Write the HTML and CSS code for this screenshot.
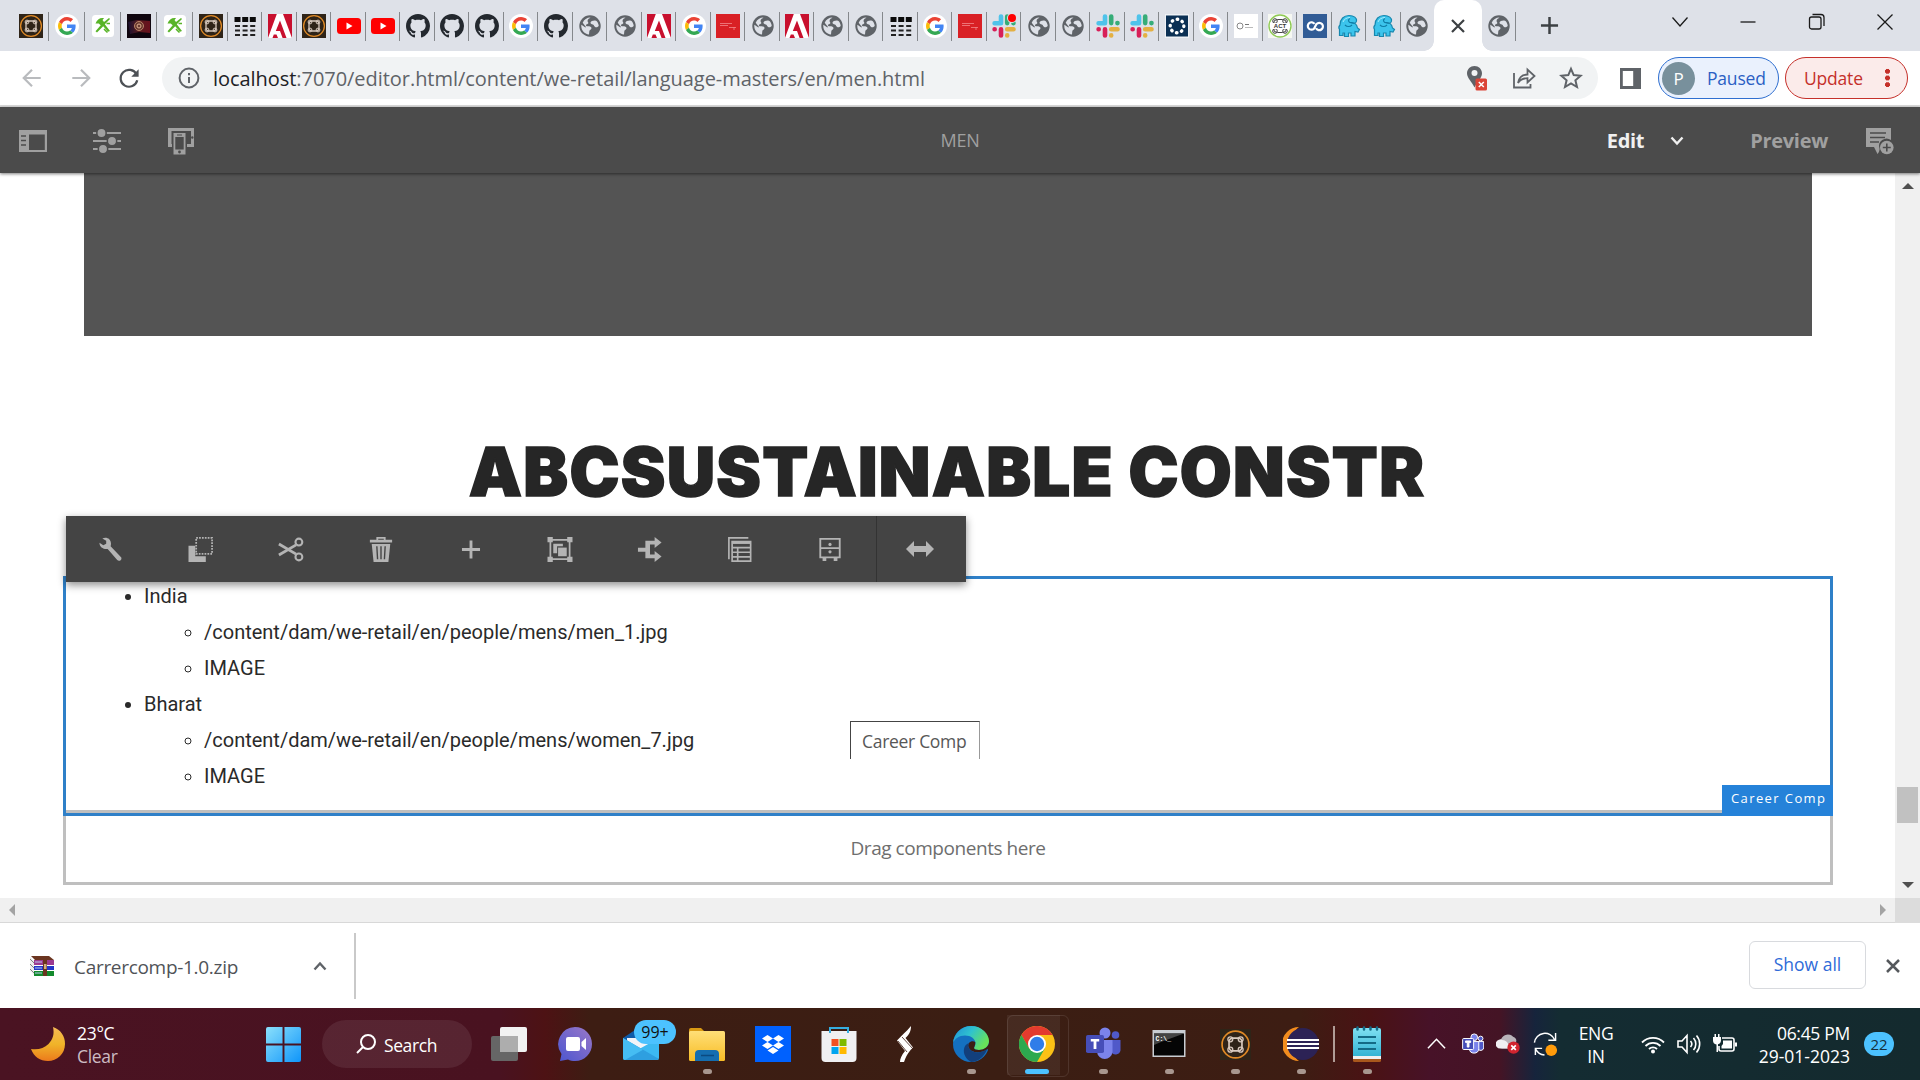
FILE: index.html
```html
<!DOCTYPE html>
<html lang="en">
<head>
  <meta charset="UTF-8" />
  <meta name="viewport" content="width=device-width, initial-scale=1.0"/>
  <title>Men</title>
  <link rel="stylesheet" href="styles.css">
</head>
<body>
  <!-- icon sprite -->
  <svg class="sprite" aria-hidden="true">
    <defs>
      <linearGradient id="gMoon" x1="0" y1="0" x2="0" y2="1"><stop offset="0" stop-color="#f5b955"/><stop offset=".5" stop-color="#f0b429"/><stop offset="1" stop-color="#ec7a1c"/></linearGradient>
      <linearGradient id="gWin" gradientUnits="userSpaceOnUse" x1="0" y1="0" x2="36" y2="36"><stop offset="0" stop-color="#8be0fb"/><stop offset="1" stop-color="#0f95fa"/></linearGradient>
      <linearGradient id="gChat" x1="1" y1="0" x2="0" y2="1"><stop offset="0" stop-color="#9a78c8"/><stop offset="1" stop-color="#4c56d0"/></linearGradient>
      <linearGradient id="gFolder" x1="0" y1="0" x2="0" y2="1"><stop offset="0" stop-color="#ffdf78"/><stop offset="1" stop-color="#f8bd26"/></linearGradient>
      <linearGradient id="gEdge" x1="0" y1="0" x2="1" y2=".5"><stop offset="0" stop-color="#1f8fd8"/><stop offset=".5" stop-color="#2fc2cf"/><stop offset="1" stop-color="#68e25a"/></linearGradient>
      <linearGradient id="gNote" x1="0" y1="0" x2="0" y2="1"><stop offset="0" stop-color="#7fe0f2"/><stop offset="1" stop-color="#35b4d4"/></linearGradient>
      <linearGradient id="gNeb" x1="0" y1="0" x2="1" y2="0"><stop offset="0" stop-color="#1a1030"/><stop offset=".5" stop-color="#5a1c20"/><stop offset="1" stop-color="#6a101c"/></linearGradient>
    </defs>
    <symbol id="aem" viewBox="0 0 24 24"><path fill="#2f2418" d="M0 0h24v24H0z"/><circle cx="12" cy="12" r="10.400" fill="none" stroke="#e08a26" stroke-width="1.300"/><rect x="7" y="7" width="10" height="10" rx="3" fill="none" stroke="#d8c9bd" stroke-width="1.300"/><g fill="none" stroke="#d8c9bd" stroke-width="1"><circle cx="8" cy="8" r="1.900"/><circle cx="16" cy="8" r="1.900"/><circle cx="8" cy="16" r="1.900"/><circle cx="16" cy="16" r="1.900"/></g></symbol>
    <symbol id="google" viewBox="0 0 24 24"><circle cx="12" cy="12" r="12" fill="#fff"/><svg x="3" y="3" width="18" height="18" viewBox="0 0 48 48"><path fill="#EA4335" d="M24 9.5c3.54 0 6.71 1.22 9.21 3.6l6.85-6.85C35.9 2.38 30.47 0 24 0 14.62 0 6.51 5.38 2.56 13.22l7.98 6.19C12.43 13.72 17.74 9.5 24 9.5z"/><path fill="#4285F4" d="M46.98 24.55c0-1.57-.15-3.09-.38-4.55H24v9.02h12.94c-.58 2.96-2.26 5.48-4.78 7.18l7.73 6c4.51-4.18 7.09-10.36 7.09-17.65z"/><path fill="#FBBC05" d="M10.53 28.59c-.48-1.45-.76-2.99-.76-4.59s.27-3.14.76-4.59l-7.98-6.19C.92 16.46 0 20.12 0 24c0 3.88.92 7.54 2.56 10.78l7.97-6.19z"/><path fill="#34A853" d="M24 48c6.48 0 11.93-2.13 15.89-5.81l-7.73-6c-2.15 1.45-4.92 2.3-8.16 2.3-6.26 0-11.57-4.22-13.47-9.91l-7.98 6.19C6.51 42.62 14.62 48 24 48z"/></svg></symbol>
    <symbol id="tool" viewBox="0 0 24 24"><rect x="1" y="1" width="22" height="22" rx="3.500" fill="#fff"/><path fill="#58b428" d="M4.500 9.500C6 5.500 9 3.500 13 4.200L11.500 6l1.500 2 5-4 1 1-5.200 5.200L19 17l-2 .8-4.800-5.600L6 18.500l-1.500-1.300 5.200-6-2-1.700z"/><path stroke="#58b428" stroke-width="1.600" d="M15.500 9.500h3.500M13 15l3.500 3.500"/></symbol>
    <symbol id="nebula" viewBox="0 0 24 24"><path fill="#10060f" d="M0 0h24v24H0z"/><path fill="url(#gNeb)" d="M1 8l9-2 13 1v12l-11-1-9 2z"/><circle cx="12" cy="12" r="4.500" fill="#6a3a30" stroke="#b98468"/><circle cx="12" cy="12" r="2" fill="none" stroke="#e0b090"/></symbol>
    <symbol id="grid" viewBox="0 0 24 24"><path fill="#0a0a0a" d="M1.500 3h6v5h-6zM9.200 3h6v5h-6zM16.800 3h6v5h-6z"/><path stroke="#222" stroke-width="2" stroke-dasharray="5 2.600" d="M2 12h21M2 16.500h21M2 21h21"/></symbol>
    <symbol id="adobe" viewBox="0 0 24 24"><path fill="#c8102e" d="M0 0h24v24H0z"/><path fill="#fff" d="M8.800 0h6.200L24 24h-5.500L12 6.500 7.800 17H12l2.600 7H10l-1.500-3.500H5.800L4.500 24H0z"/></symbol>
    <symbol id="youtube" viewBox="0 0 24 24"><rect y="4" width="24" height="16" rx="3.500" fill="#f00"/><path fill="#fff" d="M9.500 8.500 15.500 12l-6 3.500z"/></symbol>
    <symbol id="github" viewBox="0 0 16 16"><path fill="#24292f" d="M8 0C3.58 0 0 3.58 0 8c0 3.54 2.29 6.53 5.47 7.59.4.07.55-.17.55-.38 0-.19-.01-.82-.01-1.49-2.01.37-2.53-.49-2.69-.94-.09-.23-.48-.94-.82-1.13-.28-.15-.68-.52-.01-.53.63-.01 1.08.58 1.23.82.72 1.21 1.87.87 2.33.66.07-.52.28-.87.51-1.07-1.78-.2-3.64-.89-3.64-3.95 0-.87.31-1.59.82-2.15-.08-.2-.36-1.02.08-2.12 0 0 .67-.21 2.2.82.64-.18 1.32-.27 2-.27s1.36.09 2 .27c1.53-1.04 2.2-.82 2.2-.82.44 1.1.16 1.92.08 2.12.51.56.82 1.27.82 2.15 0 3.07-1.87 3.75-3.65 3.95.29.25.54.73.54 1.48 0 1.07-.01 1.93-.01 2.2 0 .21.15.46.55.38A8.01 8.01 0 0 0 16 8c0-4.42-3.58-8-8-8z"/></symbol>
    <symbol id="globe" viewBox="0 0 24 24"><circle cx="12" cy="12" r="10.700" fill="#5f6368"/><path fill="#dee1e8" d="M12.500 3.500c-1 1.200-3 1.300-3 3.500 0 1 1 1.200.8 2.200-.3 1.200-2.200.6-2.400 1.800-.1 1 .7 1.300 2 1.300 2 0 3.600.4 3.600 2 0 1.400-2 1.400-2.200 3-.1 1.300-.2 2.300-.3 3.200C6.500 20 3.300 16.500 3.300 12c0 0 0-.7.1-1.300l4 2.900c.8-.6.2-1.600-.8-2.400L4.700 8.800C6 5.500 9 3.500 12.500 3.500zM16.500 6.500c1 0 2 .2 2.500 1 1 1.300 1.700 2.900 1.700 4.500-1.200 1.300-2 1.500-3.200 1.200-1.500-.4-1.200-2-2.600-2.600-1.500-.5-2.600-.8-2.400-2 .2-1.300 2.200-2.100 4-2.100z"/></symbol>
    <symbol id="redcard" viewBox="0 0 24 24"><path fill="#d92025" d="M0 0h24v24H0z"/><path stroke="#f2878a" stroke-width=".8" d="M4 9.500h12M4 11.500h8M13 13.500h7M18 13v3"/></symbol>
    <symbol id="slack" viewBox="0 0 24 24"><g stroke-width="4.600" stroke-linecap="round"><path stroke="#4fc3ea" d="M9 2.600v6.600M2.600 9.200H9"/><path stroke="#36ad78" d="M15.200 2.600v6.500M21.400 9.100h.1"/><path stroke="#e4b042" d="M15.200 15.200h6.300M15.200 21.400v.1"/><path stroke="#d81f58" d="M9 15.200v6.300M2.600 15.200h.1"/></g></symbol>
    <symbol id="slackdot" viewBox="0 0 24 24"><use href="#slack"/><circle cx="20" cy="4" r="5" fill="#dee1e8"/><circle cx="20" cy="4" r="4" fill="#f00"/></symbol>
    <symbol id="dots" viewBox="0 0 24 24"><path fill="#eef1f5" d="M0 0h24v24H0z"/><path fill="#0b3054" d="M1 1.500h22v21H1z"/><circle cx="12" cy="12" r="6.800" fill="none" stroke="#fff" stroke-width="3.400" stroke-linecap="round" stroke-dasharray=".5 4.841"/></symbol>
    <symbol id="card" viewBox="0 0 24 24"><path fill="#fff" d="M0 0h24v24H0z"/><circle cx="6" cy="12" r="3" fill="none" stroke="#888"/><path stroke="#777" d="M11 10.500h4"/><path stroke="#bbb" d="M11 13.500h8"/></symbol>
    <symbol id="act" viewBox="0 0 24 24"><path fill="#f6f8f2" d="M0 0h24v24H0z"/><circle cx="12" cy="12" r="11" fill="#fff" stroke="#8fca55" stroke-width="1.400"/><g fill="none" stroke="#444" stroke-width="1"><rect x="5.500" y="5.500" width="13" height="13" rx="4"/><circle cx="7" cy="7" r="2.300"/><circle cx="17" cy="7" r="2.300"/><circle cx="7" cy="17" r="2.300"/><circle cx="17" cy="17" r="2.300"/></g><path fill="#fff" d="M5 9h14v6H5z"/><text x="12" y="14.300" class="act-text">ACT</text></symbol>
    <symbol id="co" viewBox="0 0 24 24"><path fill="#315c96" d="M0 0h24v24H0z"/><path d="M11.500 9.800A3.700 3.700 0 1 0 11 14.700L13.500 10A3.700 3.700 0 1 1 13 14.300" fill="none" stroke="#fff" stroke-width="2.200"/></symbol>
    <symbol id="elephant" viewBox="0 0 24 24"><path fill="#3cc4ec" stroke="#1787ae" stroke-width="1.200" d="M3 11C3 5 7 1.500 12 1.500c5 0 8 2.500 7.500 5.500-.4 2.500-3.500 3.200-5 1.500 4 0 5.500 3 6 5.500l2 1.500-1.500 2.500-3-.5v4.500h-4V19h-2.500v3.500h-4V19H6v2.500H2.500v-6c-1-1.500-.7-3.200.5-4.500z"/><path fill="none" stroke="#0f7da6" stroke-width="1.200" d="M15.500 8.500c-3.500 1-5.500-2.500-2.500-4M8 11c2 2 5 2 7 0"/><path fill="none" stroke="#a5edfc" d="M6 8c1-3 4-4.500 7-4.500"/></symbol>
    <symbol id="teams" viewBox="0 0 36 36"><circle cx="20" cy="7" r="5.500" fill="#7b83eb"/><circle cx="30.500" cy="9" r="3.800" fill="#5059c9"/><path fill="#5059c9" d="M26 14h9.500v10.500a5 5 0 0 1-9.500 1z"/><path fill="#7b83eb" d="M12 14h15.500v12a7.800 7.800 0 0 1-15.500 0z"/><rect x="1" y="9" width="18" height="18" rx="1.800" fill="#464eb8"/><path fill="#fff" d="M5.800 13h8.400v2.400h-2.800V23H8.600v-7.600H5.800z"/></symbol>
  </svg>

  <!-- tab strip -->
  <div class="tabstrip">
    <div class="tab wide"><svg><use href="#aem"/></svg></div>
    <div class="tab wide"><svg><use href="#google"/></svg></div>
    <div class="tab wide"><svg><use href="#tool"/></svg></div>
    <div class="tab wide"><svg><use href="#nebula"/></svg></div>
    <div class="tab wide"><svg><use href="#tool"/></svg></div>
    <div class="tab"><svg><use href="#aem"/></svg></div>
    <div class="tab"><svg><use href="#grid"/></svg></div>
    <div class="tab"><svg><use href="#adobe"/></svg></div>
    <div class="tab"><svg><use href="#aem"/></svg></div>
    <div class="tab"><svg><use href="#youtube"/></svg></div>
    <div class="tab"><svg><use href="#youtube"/></svg></div>
    <div class="tab"><svg><use href="#github"/></svg></div>
    <div class="tab"><svg><use href="#github"/></svg></div>
    <div class="tab"><svg><use href="#github"/></svg></div>
    <div class="tab"><svg><use href="#google"/></svg></div>
    <div class="tab"><svg><use href="#github"/></svg></div>
    <div class="tab"><svg><use href="#globe"/></svg></div>
    <div class="tab"><svg><use href="#globe"/></svg></div>
    <div class="tab"><svg><use href="#adobe"/></svg></div>
    <div class="tab"><svg><use href="#google"/></svg></div>
    <div class="tab"><svg><use href="#redcard"/></svg></div>
    <div class="tab"><svg><use href="#globe"/></svg></div>
    <div class="tab"><svg><use href="#adobe"/></svg></div>
    <div class="tab"><svg><use href="#globe"/></svg></div>
    <div class="tab"><svg><use href="#globe"/></svg></div>
    <div class="tab"><svg><use href="#grid"/></svg></div>
    <div class="tab"><svg><use href="#google"/></svg></div>
    <div class="tab"><svg><use href="#redcard"/></svg></div>
    <div class="tab"><svg><use href="#slackdot"/></svg></div>
    <div class="tab"><svg><use href="#globe"/></svg></div>
    <div class="tab"><svg><use href="#globe"/></svg></div>
    <div class="tab"><svg><use href="#slack"/></svg></div>
    <div class="tab"><svg><use href="#slack"/></svg></div>
    <div class="tab"><svg><use href="#dots"/></svg></div>
    <div class="tab"><svg><use href="#google"/></svg></div>
    <div class="tab"><svg><use href="#card"/></svg></div>
    <div class="tab"><svg><use href="#act"/></svg></div>
    <div class="tab"><svg><use href="#co"/></svg></div>
    <div class="tab"><svg><use href="#elephant"/></svg></div>
    <div class="tab"><svg><use href="#elephant"/></svg></div>
    <div class="tab last"><svg><use href="#globe"/></svg></div>
    <div class="tab active"><svg viewBox="0 0 24 24"><path d="M6 6l12 12M18 6L6 18" stroke="#3c4043" stroke-width="2.200"/></svg></div>
    <div class="tab"><svg><use href="#globe"/></svg></div>
    <svg class="new-tab" viewBox="0 0 20 20"><path d="M10 1v18M1 10h18" stroke="#3c4043" stroke-width="2.600"/></svg>
    <div class="win-controls">
      <svg viewBox="0 0 20 20"><path d="M2.500 5.500L10 14l7.500-8.500"/></svg>
      <svg viewBox="0 0 20 20"><path d="M2.500 10h15"/></svg>
      <svg viewBox="0 0 20 20"><rect x="2.500" y="5" width="11.500" height="12" rx="2"/><path d="M5.500 2.500h8.500a3 3 0 0 1 3 3V14"/></svg>
      <svg viewBox="0 0 20 20"><path d="M2.500 2.500l15 15M17.500 2.500l-15 15"/></svg>
    </div>
  </div>

  <!-- address bar -->
  <div class="toolbar">
    <div class="nav">
      <svg class="off" viewBox="0 0 24 24"><path d="M21.500 12H3M12 3l-9 9 9 9"/></svg>
      <svg class="off" viewBox="0 0 24 24"><path d="M2.500 12H21M12 3l9 9-9 9"/></svg>
      <svg viewBox="0 0 24 24"><path d="M20.200 8A9.200 9.200 0 1 0 21 14.500"/><path d="M22.500 2.500v8h-8z" fill="#4d5156" stroke="none"/></svg>
    </div>
    <div class="omnibox">
      <svg class="info" viewBox="0 0 22 22"><circle cx="11" cy="11" r="9.400"/><path d="M11 10v6M11 6v2.200"/></svg>
      <span class="url"><b>localhost</b>:7070/editor.html/content/we-retail/language-masters/en/men.html</span>
      <div class="omni-icons">
        <svg viewBox="0 0 24 26"><path fill="#5f6368" d="M9.500 1c4.200 0 7.500 3.200 7.500 7.300 0 4.600-4.500 8.200-7.500 14.200C6.500 16.500 2 12.900 2 8.300 2 4.200 5.300 1 9.500 1z"/><circle cx="9.500" cy="8" r="3" fill="#f1f3f4"/><rect x="10.500" y="13.500" width="11.500" height="12" rx="1.500" fill="#db4437"/><path d="M13.800 17l5 5M18.800 17l-5 5" stroke="#fff" stroke-width="1.500"/></svg>
        <svg viewBox="0 0 24 24" fill="none" stroke="#5f6368" stroke-width="1.800"><path d="M2 7v14.500h16.500V18"/><path d="M6 17c1-6 4-8.500 9.500-8.500V3.500L22.500 10l-7 6.500v-4.300c-4.500 0-7 1-9.500 4.800z"/></svg>
        <svg viewBox="0 0 24 24"><path fill="none" stroke="#5f6368" stroke-width="2" d="M12 2.800l2.700 6.300 6.900.6-5.200 4.600 1.600 6.700-6-3.600L6 21l1.600-6.700-5.200-4.600 6.900-.6z"/></svg>
      </div>
    </div>
    <svg class="side-panel" viewBox="0 0 21 21"><path fill="#5f6368" d="M0 0h21v21H0z"/><path fill="#fff" d="M2.800 3h10.400v15H2.800z"/></svg>
    <div class="pill paused"><span class="avatar">P</span><span class="pill-text">Paused</span></div>
    <div class="pill update"><span class="pill-text">Update</span><i class="kebab"></i></div>
  </div>

  <!-- editor header -->
  <div class="editor-bar">
    <div class="editor-left">
      <svg viewBox="0 0 28 28"><path fill-rule="evenodd" d="M0 3h28v22H0zm10 4.500v15.500h15.800V7.500z"/><path stroke="#4b4b4b" stroke-width="1.500" d="M2 9h5M2 13.500h5M2 18h5"/></svg>
      <svg viewBox="0 0 28 28"><path stroke="#a0a0a0" stroke-width="2" d="M0 6h28M0 14h28M0 22h28"/><g stroke="#4b4b4b" stroke-width="1.500"><circle cx="8.500" cy="6" r="4.700"/><circle cx="19" cy="14" r="4.700"/><circle cx="10" cy="22" r="4.700"/></g></svg>
      <svg viewBox="0 0 28 28"><path d="M1 1h26v19h-8.500v-3H24V4H4.500v13H6v3H1z"/><circle cx="25.300" cy="10.500" r="1.200" fill="#4b4b4b"/><path fill="#4b4b4b" d="M5 5h15v23H5z"/><path fill-rule="evenodd" d="M6.500 6h12v21.500h-12zm1.800 4v12.500h8.400V10z"/><path d="M10 8h5" stroke="#4b4b4b"/><circle cx="12.500" cy="25" r="1.400" fill="#4b4b4b"/></svg>
    </div>
    <span class="page-title">MEN</span>
    <div class="editor-right">
      <span class="edit">Edit</span>
      <svg class="chev" viewBox="0 0 14 10"><path d="M1.500 1.500L7 7.500l5.500-6" fill="none" stroke="#f0f0f0" stroke-width="2.400"/></svg>
      <span class="preview">Preview</span>
      <svg class="annotate" viewBox="0 0 28 28"><path d="M0 1h25v12a7.500 7.500 0 0 0-11.500 8.500c.3 1.500-.5 4-2 5.500L8 20H0z"/><path stroke="#4b4b4b" stroke-width="1.500" d="M4 6h16M4 10.500h15M4 15h9"/><circle cx="20.800" cy="20.500" r="6.800"/><path stroke="#4b4b4b" stroke-width="1.600" d="M20.800 16.500v8M16.800 20.500h8"/></svg>
    </div>
  </div>

  <!-- page being edited -->
  <div class="viewport">
    <div class="canvas">
      <div class="hero"></div>
      <h1>ABCSUSTAINABLE CONSTR</h1>
      <div class="parsys">
        <div class="component">
          <ul>
            <li>India
              <ul>
                <li>/content/dam/we-retail/en/people/mens/men_1.jpg</li>
                <li>IMAGE</li>
              </ul>
            </li>
            <li>Bharat
              <ul>
                <li>/content/dam/we-retail/en/people/mens/women_7.jpg</li>
                <li>IMAGE</li>
              </ul>
            </li>
          </ul>
          <span class="badge">Career Comp</span>
          <span class="tooltip">Career Comp</span>
          <div class="actions">
            <svg viewBox="0 0 24 26"><path d="M3 1.500c4-2 9 0 9 5.500 0 1-.2 1.800-.4 2.500L22.500 21c1.500 2.500-2 5-4 3L8.500 12.500C4 13 0 10.500 0 6l4 2.500 3-1.500v-3z"/></svg>
            <svg viewBox="0 0 26 26"><path d="M0 9h7v11h11v6H0z"/><path fill="none" stroke="#b4b4b4" stroke-width="1.800" stroke-dasharray="1.800 1.200" d="M8 1h16.500v16.500H8z"/></svg>
            <svg viewBox="0 0 28 26"><g fill="none" stroke="#b4b4b4" stroke-width="2.200"><circle cx="22.500" cy="5" r="3.700"/><circle cx="22.500" cy="21" r="3.700"/><path d="M1 7l18.500 11M1 19L19.500 8" stroke-width="3"/></g></svg>
            <svg viewBox="0 0 24 27"><path d="M0 3h7V0h10v3h7v3H0zM9 3h6V2H9z"/><path d="M2 7.500h20L20 27H4z"/><path stroke="#444" stroke-width="1.500" d="M7.500 10l.8 14M12 10v14M16.500 10l-.8 14"/></svg>
            <svg viewBox="0 0 20 20"><path d="M8.500 0.500h3v8h8v3h-8v8h-3v-8h-8v-3h8z"/></svg>
            <svg viewBox="0 0 26 26"><path fill="none" stroke="#b4b4b4" stroke-width="1.800" d="M3 3h20v20H3z"/><path d="M0 0h5.500v5.500H0zM20.500 0H26v5.500h-5.500zM0 20.500h5.500V26H0zM20.500 20.500H26V26h-5.500zM6 7h10v2.500h-6V17H6z"/><path d="M11 11h9v9h-9z"/></svg>
            <svg viewBox="0 0 26 27"><path d="M0 11.500h8V4h10V0l7.500 6-7.500 6V8h-5v11h5v-4l7.500 6-7.500 6v-4H8v-7H0z"/></svg>
            <svg viewBox="0 0 26 27"><g fill="none" stroke="#b4b4b4" stroke-width="1.800"><path d="M22 1H1v23M4.500 5h20v21h-20zM4.500 11.500h20M4.500 16.500h20M4.500 21.500h20M10.500 11v15"/></g><path d="M4.500 4.500h20v3h-20z"/></svg>
            <svg viewBox="0 0 24 27"><path fill="none" stroke="#b4b4b4" stroke-width="2" d="M1.500 2h21v20h-21zM1 12h22"/><circle cx="12" cy="8" r="1.700"/><circle cx="12" cy="16" r="1.700"/><path d="M4 22h4v4H4zM16 22h4v4h-4z"/></svg>
            <svg class="convert" viewBox="0 0 28 18"><path d="M0 9l8-8v5h12V1l8 8-8 8v-5H8v5z"/></svg>
          </div>
        </div>
        <div class="dropzone">Drag components here</div>
      </div>
    </div>
    <div class="vscroll"><i class="up"></i><b></b><i class="down"></i></div>
    <div class="hscroll"><i class="left"></i><i class="right"></i></div>
    <div class="corner"></div>
  </div>

  <!-- downloads -->
  <div class="downloads">
    <div class="download-item">
      <svg class="rar" viewBox="0 0 24 20"><path fill="#eee" d="M0 1l4 4v14l-4-4z"/><path stroke="#555" stroke-width=".7" d="M0 3l4 4M0 8l4 4M0 13l4 4"/><path fill="#6b3520" d="M1 0h18l5 4H5z"/><path fill="#9c3a90" d="M4 4h20v5H4z"/><path fill="#2436c8" d="M4 10h20v4H4z"/><path fill="#138a2c" d="M4 15h20v5H4z"/><path fill="#6b3520" d="M13 0h4v20h-4z"/><path fill="#d0b080" d="M14 8h2.500v5H14z"/><path stroke="#b9c7f0" d="M5 6h7M5 12h7M5 17h7"/></svg>
      <span class="filename">Carrercomp-1.0.zip</span>
      <svg class="caret" viewBox="0 0 14 10"><path d="M1.500 8.500L7 2.500l5.500 6" fill="none" stroke="#5f6368" stroke-width="2.400"/></svg>
    </div>
    <div class="show-all">Show all</div>
    <svg class="close" viewBox="0 0 16 16"><path d="M2 2l12 12M14 2L2 14" stroke="#55585c" stroke-width="2.500"/></svg>
  </div>

  <!-- windows taskbar -->
  <div class="taskbar">
    <div class="weather">
      <svg viewBox="0 0 34 34"><path fill="url(#gMoon)" d="M22 0c8 3 12 9 12 17 0 10-8 17-17 17C9 34 3 30 0 22c7 1 13-.5 17.500-5C22 12 23.500 7 22 0z"/></svg>
      <div><span>23°C</span><span class="dim">Clear</span></div>
    </div>
    <svg class="start" viewBox="0 0 36 36"><g fill="url(#gWin)"><path d="M0 2a2 2 0 0 1 2-2h15v17H0zM19 0h15a2 2 0 0 1 2 2v15H19zM0 19h17v17H2a2 2 0 0 1-2-2zM19 19h17v15a2 2 0 0 1-2 2H19z"/></g></svg>
    <div class="search">
      <svg viewBox="0 0 20 20"><circle cx="12" cy="8" r="7"/><path d="M7 13l-6 6"/></svg>
      <span>Search</span>
    </div>
    <div class="apps">
      <div><svg viewBox="0 0 36 36"><rect x="0" y="10" width="27" height="25" rx="2" fill="#666"/><rect x="9" y="1" width="27" height="25" rx="2" fill="#f2f2f2"/><path fill="#adadad" d="M9 10h18v16H9z"/></svg></div>
      <div><svg viewBox="0 0 36 36"><path fill="url(#gChat)" d="M18 1c9.500 0 17 7.500 17 17s-7.500 17-17 17c-2.500 0-5-.5-7-1.500L3 35l1.500-7A17 17 0 0 1 18 1z"/><rect x="9" y="11" width="14" height="14" rx="2" fill="#fff"/><path fill="#fff" d="M24.500 16l4.500-4v12l-4.500-4z"/></svg></div>
      <div><svg viewBox="0 0 36 36"><path fill="#0f5aa8" d="M0 12L18 0l18 12v6H0z"/><path fill="#f2f4f8" d="M4 12h28v12H4z"/><path fill="#3cb9f2" d="M36 12v20a2 2 0 0 1-2 2H2l-2-2z"/><path fill="#2e9fe0" d="M0 12l36 21-2 1H2a2 2 0 0 1-2-2z"/><path fill="#45bdf3" d="M0 12l20 11.700L2 34a2 2 0 0 1-2-2z"/></svg><em>99+</em></div>
      <div class="running"><svg viewBox="0 0 36 36"><path fill="#d99a14" d="M0 4a2 2 0 0 1 2-2h10l4 4v6H0z"/><rect y="5" width="36" height="30" rx="1.500" fill="url(#gFolder)"/><path fill="#156eb0" d="M6 28a4 4 0 0 1 4-4h16a4 4 0 0 1 4 4v7H6z"/><path stroke="#0b4a80" stroke-width="1.500" d="M12 29.500h13"/></svg></div>
      <div><svg viewBox="0 0 36 36"><path fill="#0061fe" d="M0 0h36v36H0z"/><path fill="#fff" d="M12.500 9l5.500 3.500-5.500 3.500L7 12.500zM23.500 9l5.500 3.500-5.500 3.500-5.500-3.500zM12.500 16l5.500 3.500-5.500 3.500L7 19.500zM23.500 16l5.500 3.500-5.500 3.500-5.500-3.500zM18 21l5.500 3.500L18 28l-5.500-3.500z"/></svg></div>
      <div><svg viewBox="0 0 36 36"><path fill="#f0f0f2" d="M.5 5h35v27a4 4 0 0 1-4 4h-27a4 4 0 0 1-4-4z"/><path fill="none" stroke="#35aee0" stroke-width="2" d="M9 7V2h18v5"/><path fill="#f25022" d="M10.500 13h7v7h-7z"/><path fill="#7fba00" d="M18.500 13h7v7h-7z"/><path fill="#00a4ef" d="M10.500 21h7v7h-7z"/><path fill="#ffb900" d="M18.500 21h7v7h-7z"/></svg></div>
      <div><svg viewBox="0 0 36 36"><path fill="#fff" d="M24 0c0 4-1 8-5.500 12L26 21.500c-3 3-6 6-9 14.500h-4c0-3 1.500-7 5-11L10 14.500C14 10 19 6 24 0z"/><path d="M15 11l11 12M11 15l9 11" stroke="#3d1d13" stroke-width=".8"/></svg></div>
      <div class="running"><svg viewBox="0 0 36 36"><circle cx="18" cy="18" r="18" fill="#1470c0"/><path fill="url(#gEdge)" d="M0 17C1 7 9 0 18 0c11 0 18 8 18 15 0 6-5 9-10 9-3 0-5-1-5-2 0-1 1.500-2 1.500-4.500C22.500 13 18 9.500 12 9.500 6 9.500 1.500 13 0 17z"/><path fill="#3d1d13" d="M22.300 16c-2-1.500-4.800-1-6.300 1-2 3 0 7.500 5.500 9 5 1.300 10-1 12.500-2.500.8-.5 1.600 0 1.400 1L36 27V17c-1 4-5 7-10 7-3 0-5-1-5-2 0-1 1.500-2.500 1.300-6z"/><path fill="#123f7c" d="M16 17c-2 3 0 7.500 5.500 9 5 1.300 9-1 12.500-2.500C31 31 25 36 18 36c-5-3-8-8-7-13 .5-3 2-5 5-6z"/></svg></div>
      <div class="focused"><svg viewBox="0 0 36 36"><circle cx="18" cy="18" r="18" fill="#fbc116"/><path fill="#e33b2e" d="M2.400 9A18 18 0 0 1 33.600 9H18l-8 13.500z"/><path fill="#2da94f" d="M2.400 9A18 18 0 0 0 18 36l7.800-13.500H10.200z"/><circle cx="18" cy="18" r="9" fill="#fff"/><circle cx="18" cy="18" r="7.200" fill="#2f7de9"/></svg></div>
      <div class="running"><svg><use href="#teams"/></svg></div>
      <div class="running"><svg viewBox="0 0 36 36"><path fill="#c9cdd2" d="M1.500 4h33v27h-33z"/><path fill="#050505" d="M3 7.500h30V29.500H3z"/><path fill="#444" d="M3 7.500h30L10 16l-7 3z"/><text x="4.500" y="14.500" class="cmd">C:\_</text></svg></div>
      <div class="running"><svg class="small"><use href="#aem"/></svg></div>
      <div class="running"><svg viewBox="0 0 36 36"><path fill="#f28c1e" d="M16 1A17 17 0 0 0 16 35C7 29 7 7 16 1z"/><circle cx="20" cy="18" r="16" fill="#2c2255"/><path stroke="#fff" stroke-width="2.200" d="M4 14h32M4 18h32M4 22h32"/></svg></div>
      <div class="running split"><svg viewBox="0 0 36 36"><rect x="4" y="26" width="28" height="10" rx="1.500" fill="#a8571c"/><path fill="#f0f0f0" d="M4 28h28v5H4z"/><path fill="url(#gNote)" d="M6 2h24a2 2 0 0 1 2 2v26H4V4a2 2 0 0 1 2-2z"/><path stroke="#136a86" stroke-width="2.500" stroke-linecap="round" d="M8.500 1.500v2M15 1.500v2M21.500 1.500v2M28 1.500v2"/><path stroke="#136a86" stroke-width="1.800" d="M9 11h18M9 17h18M9 23h18"/></svg></div>
    </div>
    <div class="tray">
      <svg class="t-up" viewBox="0 0 20 20"><path d="M1 14.500L10 5l9 9.500"/></svg>
      <svg class="t-teams"><use href="#teams"/></svg>
      <svg class="t-cloud" viewBox="0 0 26 24"><path fill="#b9b4ba" stroke="none" d="M6 17a5.500 5.500 0 0 1-1-10.500A8 8 0 0 1 18 4c4 1 4 5 3 6l-9 7z"/><path fill="#efeff2" stroke="none" d="M4 17a5 5 0 1 1 3-9c3 0 6 2 7 9z"/><circle cx="18.500" cy="16" r="6.700" fill="#d1242f" stroke="none"/><path d="M16 13.500l5 5M21 13.500l-5 5" stroke-width="1.800"/></svg>
      <svg class="t-sync" viewBox="0 0 24 26"><path d="M1 11a11 11 0 0 1 21-3M23 1v7.500h-7.500M2 24v-7h7M2.500 18c2 4 5 5.500 9 6" stroke-width="1.500"/><circle cx="18.500" cy="19" r="6" fill="#ff9b0b" stroke="none"/></svg>
      <div class="lang"><span>ENG</span><span>IN</span></div>
      <svg class="t-wifi" viewBox="0 0 24 20"><path d="M1 8.500a15.500 15.500 0 0 1 22 0M4.500 12a10.600 10.600 0 0 1 15 0M8 15a5.700 5.700 0 0 1 8 0" stroke-width="1.800"/><circle cx="12" cy="17.500" r="2" fill="#fff" stroke="none"/></svg>
      <svg class="t-vol" viewBox="0 0 24 20"><path d="M1 7h4l5-5.500v17L5 13H1zM13.500 7a4.500 4.500 0 0 1 0 6M16.500 4a9 9 0 0 1 0 12M19.500 1.500a13 13 0 0 1 0 17" stroke-width="1.600"/></svg>
      <svg class="t-bat" viewBox="0 0 24 20"><path d="M9 4h10a2 2 0 0 1 2 2v9a2 2 0 0 1-2 2H8a2 2 0 0 1-2-2v-3" stroke-width="1.600"/><path fill="#fff" stroke="none" d="M10 6.500h9v8H8.500V12L10 10zM22 8.500h2v4h-2zM0 3h8v3.500a4 4 0 0 1-3 3.700V18H3.500v-7.500A4 4 0 0 1 0 6.500zM1.500 0H3v3H1.500zM5 0h1.500v3H5z"/></svg>
      <div class="clock"><span>06:45 PM</span><span class="date">29-01-2023</span></div>
      <span class="count">22</span>
    </div>
  </div>
</body>
</html>
```
FILE: styles.css
```css
* {
  box-sizing: border-box;
}
body {
  margin: 0;
  width: 1920px;
  height: 1080px;
  overflow: hidden;
  display: flex;
  flex-direction: column;
  background: #fff;
  font-family: "Open Sans", "Noto Sans", sans-serif;
}
svg {
  display: block;
  flex: none;
}
.sprite {
  position: absolute;
  width: 0;
  height: 0;
}

/* tab strip */
.tabstrip {
  height: 51px;
  display: flex;
  align-items: center;
  padding-left: 13px;
  background: #dee1e8;
}
.tab {
  width: 34.500px;
  height: 29px;
  margin-top: 1px;
  padding-left: 1.500px;
  display: flex;
  flex: none;
  align-items: center;
  justify-content: center;
  border-right: 1.500px solid #85888c;
}
.tab.wide {
  width: 36px;
}
.tab.last {
  width: 33px;
  border-color: transparent;
}
.tab svg {
  width: 24px;
  height: 24px;
}
.tab.active {
  width: 48px;
  height: 51px;
  margin: 0;
  padding: 0;
  border: none;
  border-radius: 10px 10px 0 0;
  background: #fff;
  position: relative;
}
.tab.active::before,
.tab.active::after {
  content: "";
  position: absolute;
  bottom: 0;
  width: 10px;
  height: 10px;
}
.tab.active::before {
  left: -10px;
  background: radial-gradient(circle at 0 0, transparent 9.500px, #fff 10px);
}
.tab.active::after {
  right: -10px;
  background: radial-gradient(circle at 100% 0, transparent 9.500px, #fff 10px);
}
.new-tab {
  width: 19px;
  height: 19px;
  margin-left: 24px;
}
.win-controls {
  display: flex;
  gap: 48.500px;
  margin: 0 25px 8px auto;
}
.win-controls svg {
  width: 20px;
  height: 20px;
  fill: none;
  stroke: #1a1a1a;
  stroke-width: 1.300;
}

/* address bar */
.toolbar {
  height: 56px;
  display: flex;
  align-items: center;
  padding: 0 12px 0 21px;
  border-bottom: 2px solid #dcdcdc;
}
.nav {
  display: flex;
  gap: 26.500px;
  width: 141px;
}
.nav svg {
  width: 22px;
  height: 22px;
  fill: none;
  stroke: #4d5156;
  stroke-width: 2.400;
}
.nav .off {
  stroke: #b9bbbe;
}
.omnibox {
  width: 1436px;
  height: 42px;
  border-radius: 21px;
  background: #f1f3f4;
  display: flex;
  align-items: center;
  padding: 0 15px 0 16px;
}
.info {
  width: 22px;
  height: 22px;
  fill: none;
  stroke: #5f6368;
  stroke-width: 2;
}
.url {
  margin-left: 13px;
  font-size: 20px;
  letter-spacing: -0.050px;
  color: #5f6368;
  white-space: nowrap;
}
.url b {
  font-weight: normal;
  color: #202124;
}
.omni-icons {
  display: flex;
  gap: 23px;
  margin-left: auto;
}
.omni-icons svg {
  width: 24px;
  height: 26px;
}
.side-panel {
  width: 21px;
  height: 21px;
  margin: 0 17px 0 22px;
}
.pill {
  height: 42px;
  border-radius: 21px;
  border: 1.500px solid;
  display: flex;
  align-items: center;
}
.pill-text {
  font-size: 17.500px;
  letter-spacing: -0.200px;
}
.paused {
  width: 121px;
  padding-left: 3px;
  gap: 12px;
  color: #2a5fc4;
  border-color: #2f6fd0;
  background: #eaf1fd;
}
.avatar {
  width: 33px;
  height: 33px;
  flex: none;
  border-radius: 50%;
  background: #78909c;
  color: #fff;
  font-size: 17px;
  line-height: 33px;
  text-align: center;
}
.update {
  width: 123px;
  margin-left: 6px;
  padding: 0 17px 0 18px;
  justify-content: space-between;
  color: #c5302a;
  border-color: #c5302a;
  background: #fbebea;
}
.kebab {
  width: 5px;
  height: 20px;
  background: radial-gradient(circle, #c5302a 2.300px, transparent 2.600px) 0 0 / 5px 6.660px;
}

/* editor header */
.editor-bar {
  height: 66px;
  display: grid;
  grid-template-columns: 1fr auto 1fr;
  align-items: center;
  padding: 2px 26px 0 19px;
  background: #4b4b4b;
  box-shadow: 0 1px 3px rgba(0,0,0,0.5);
  position: relative;
  color: #a0a0a0;
}
.editor-bar svg {
  fill: #a0a0a0;
}
.editor-left {
  display: flex;
  gap: 46px;
}
.editor-left svg,
.annotate {
  width: 28px;
  height: 28px;
}
.page-title {
  padding: 0 0 2px 7px;
  font-size: 18px;
  letter-spacing: -0.200px;
}
.editor-right {
  display: flex;
  align-items: center;
  justify-content: flex-end;
  font-size: 20px;
  font-weight: 700;
  letter-spacing: -0.300px;
}
.editor-right span {
  padding-bottom: 2px;
}
.edit {
  color: #f0f0f0;
}
.chev {
  width: 14px;
  height: 10px;
  margin: 0 66px 0 26px;
}
.annotate {
  margin-left: 38px;
}

/* page being edited */
.viewport {
  height: 750px;
  display: grid;
  grid-template-columns: 1895px 25px;
  grid-template-rows: 725px 25px;
}
.canvas {
  overflow: hidden;
}
.hero {
  width: 1728px;
  height: 163px;
  margin-left: 84px;
  background: #545454;
}
h1 {
  margin: 0 0 0 63px;
  width: 1768px;
  height: 240px;
  padding-top: 88px;
  text-align: center;
  font-family: Inter, sans-serif;
  font-size: 67px;
  font-weight: 900;
  line-height: 96px;
  letter-spacing: 1.300px;
  -webkit-text-stroke: 1.500px #262626;
  color: #262626;
  white-space: nowrap;
}
.parsys {
  width: 1770px;
  height: 309px;
  margin-left: 63px;
  display: flex;
  flex-direction: column;
}
.component {
  height: 240px;
  border: 3px solid #2f80c8;
  box-shadow: inset 0 -3px #bfbfbf;
  position: relative;
}
.component ul {
  margin: 0;
  padding-left: 60px;
  font-family: Roboto, sans-serif;
  font-size: 20px;
  line-height: 36px;
  color: #2a2a2a;
  list-style: disc;
}
.component > ul {
  margin-top: -1px;
  padding: 0 0 0 78px;
}
.component ul ul {
  list-style: circle;
}
.badge {
  position: absolute;
  right: -3px;
  bottom: -3px;
  width: 111px;
  height: 31px;
  padding-left: 9px;
  background: #2582d9;
  color: #fff;
  font-size: 13px;
  line-height: 27px;
  letter-spacing: 1.400px;
  white-space: nowrap;
}
.tooltip {
  position: absolute;
  left: 784px;
  top: 142px;
  width: 130px;
  height: 38px;
  padding-left: 11px;
  border: 1.500px solid #444;
  border-right-color: #999;
  border-bottom: none;
  background: #fff;
  color: #575757;
  font-size: 17.500px;
  line-height: 38px;
  letter-spacing: -0.300px;
  white-space: nowrap;
}
.actions {
  position: absolute;
  left: 0;
  top: -63px;
  width: 900px;
  height: 66px;
  padding-right: 1px;
  display: grid;
  grid-template-columns: repeat(9, 89.900px) 1fr;
  place-items: center;
  background: linear-gradient(#333, #333) 810px 0 / 1px 100% no-repeat #444;
  box-shadow: 0 3px 8px rgba(0,0,0,0.45);
}
.actions svg {
  height: 25px;
  width: 26px;
  fill: #b4b4b4;
}
.actions svg:nth-child(5) {
  height: 19px;
}
.actions .convert {
  width: 28px;
  height: 18px;
}
.dropzone {
  height: 69px;
  border: 3px solid #bfbfbf;
  border-top: none;
  text-align: center;
  font-size: 19px;
  letter-spacing: -0.450px;
  line-height: 64px;
  color: #6e6e6e;
}

/* scrollbars */
.vscroll, .hscroll {
  background: #f0f0f0;
  display: flex;
  align-items: center;
}
.vscroll {
  flex-direction: column;
  padding: 10px 0 10px;
}
.vscroll b {
  width: 21px;
  height: 36px;
  margin: 598px 0 auto;
  background: #c1c1c1;
}
.hscroll {
  justify-content: space-between;
  padding: 0 9px;
  border-bottom: 1px solid #d8d8d8;
}
.corner {
  background: #dcdcdc;
}
.vscroll i, .hscroll i {
  width: 0;
  height: 0;
  border: 6px solid transparent;
}
.vscroll .up {
  border-top: none;
  border-bottom-color: #505050;
}
.vscroll .down {
  border-bottom: none;
  border-top-color: #505050;
}
.hscroll .left {
  border-left: none;
  border-right-color: #a3a3a3;
}
.hscroll .right {
  border-right: none;
  border-left-color: #a3a3a3;
}

/* downloads */
.downloads {
  height: 85px;
  display: flex;
  align-items: center;
  padding-right: 19px;
}
.download-item {
  width: 356px;
  height: 66px;
  display: flex;
  align-items: center;
  padding: 0 27px 0 30px;
  border-right: 2px solid #c9c9c9;
}
.rar {
  width: 24px;
  height: 20px;
}
.filename {
  margin: 2px auto 0 20px;
  font-size: 19px;
  letter-spacing: -0.300px;
  color: #505357;
}
.caret {
  width: 14px;
  height: 10px;
}
.show-all {
  width: 117px;
  height: 48px;
  margin: 0 19px 1px auto;
  border: 1px solid #d8dade;
  border-radius: 6px;
  color: #2f6bd8;
  font-size: 17.500px;
  font-weight: 500;
  line-height: 45px;
  text-align: center;
}
.close {
  width: 16px;
  height: 16px;
}

/* taskbar */
.taskbar {
  height: 72px;
  display: flex;
  align-items: center;
  background: linear-gradient(90deg, #4a1322 0, #491220 500px, #4d1214 545px, #3d1d13 590px, #3b1e13 1000px, #3d1d13 1300px, #4a1214 1370px, #471228 1430px, #441425 1500px, #16243c 1535px, #142c32 1560px, #142a2e 100%);
  color: #fff;
  font-size: 17.500px;
}
.weather {
  width: 266px;
  padding-left: 31px;
  display: flex;
  align-items: center;
  gap: 12px;
}
.weather svg {
  width: 34px;
  height: 34px;
}
.weather span, .lang span, .clock span {
  display: block;
  line-height: 23px;
  letter-spacing: -0.300px;
}
.weather div, .lang, .clock {
  padding-top: 2px;
}
.dim {
  color: #cdbcc2;
}
.start {
  width: 35px;
  height: 35px;
}
.search {
  width: 150px;
  height: 48px;
  margin: 0 4px 0 21px;
  padding-left: 34px;
  border-radius: 24px;
  display: flex;
  align-items: center;
  gap: 8px;
  background: rgba(255,255,255,0.08);
  font-weight: 500;
  letter-spacing: -0.400px;
}
.search svg {
  width: 20px;
  height: 20px;
  fill: none;
  stroke: #fff;
  stroke-width: 2;
}
.search span {
  padding-top: 1px;
}
.apps {
  display: grid;
  grid-template-columns: repeat(14, 66px);
}
.apps div {
  height: 72px;
  display: flex;
  align-items: center;
  justify-content: center;
  position: relative;
}
.apps svg {
  width: 36px;
  height: 36px;
  z-index: 1;
}
.apps svg.small {
  width: 31px;
  height: 31px;
}
.apps em {
  position: absolute;
  z-index: 2;
  left: 26px;
  top: 12px;
  width: 42px;
  height: 24px;
  border-radius: 12px;
  background: #4cc2ff;
  color: #111;
  font-size: 16px;
  font-style: normal;
  line-height: 24px;
  text-align: center;
}
.running::after, .focused::after {
  content: "";
  position: absolute;
  bottom: 6px;
  width: 9px;
  height: 5px;
  border-radius: 3px;
  background: #a8978f;
}
.focused::after {
  width: 24px;
  background: #4cc2ff;
}
.focused {
  background: linear-gradient(rgba(255,255,255,0.06), rgba(255,255,255,0.06)) 3px 7px / 53px 60px no-repeat;
}
.focused::before {
  content: "";
  position: absolute;
  left: 3px;
  top: 7px;
  width: 60px;
  height: 60px;
  border: 1px solid rgba(255,255,255,0.1);
  border-radius: 6px;
}
.split::before {
  content: "";
  position: absolute;
  left: -1px;
  width: 2px;
  height: 36px;
  background: #b09c96;
}
.cmd {
  fill: #fff;
  font: bold 6.500px "Liberation Mono", monospace;
}
.act-text {
  fill: #333;
  font: bold 6px "Liberation Sans", sans-serif;
  text-anchor: middle;
}
.tray {
  flex: 1;
  display: flex;
  align-items: center;
  padding: 0 26px 0 27px;
}
.tray svg {
  width: 22px;
  height: 22px;
  fill: none;
  stroke: #fff;
  stroke-width: 1.600;
}
.tray .t-up {
  width: 19px;
}
.tray .t-teams {
  margin-left: 16px;
}
.tray .t-cloud {
  width: 25px;
  margin-left: 12px;
}
.tray .t-sync {
  width: 24px;
  height: 25px;
  margin-left: 12px;
}
.lang {
  width: 42px;
  margin-left: 18px;
  text-align: center;
}
.tray .t-wifi {
  width: 24px;
  margin-left: 24px;
}
.tray .t-vol {
  width: 24px;
  margin-left: 12px;
}
.tray .t-bat {
  width: 24px;
  margin-left: 12px;
}
.clock {
  margin-left: auto;
  text-align: right;
}
.clock .date {
  letter-spacing: 0;
}
.count {
  width: 30px;
  height: 24px;
  margin-left: 14px;
  border-radius: 12px;
  background: #4cc2ff;
  color: #16303c;
  font-size: 15px;
  line-height: 24px;
  text-align: center;
}
```
